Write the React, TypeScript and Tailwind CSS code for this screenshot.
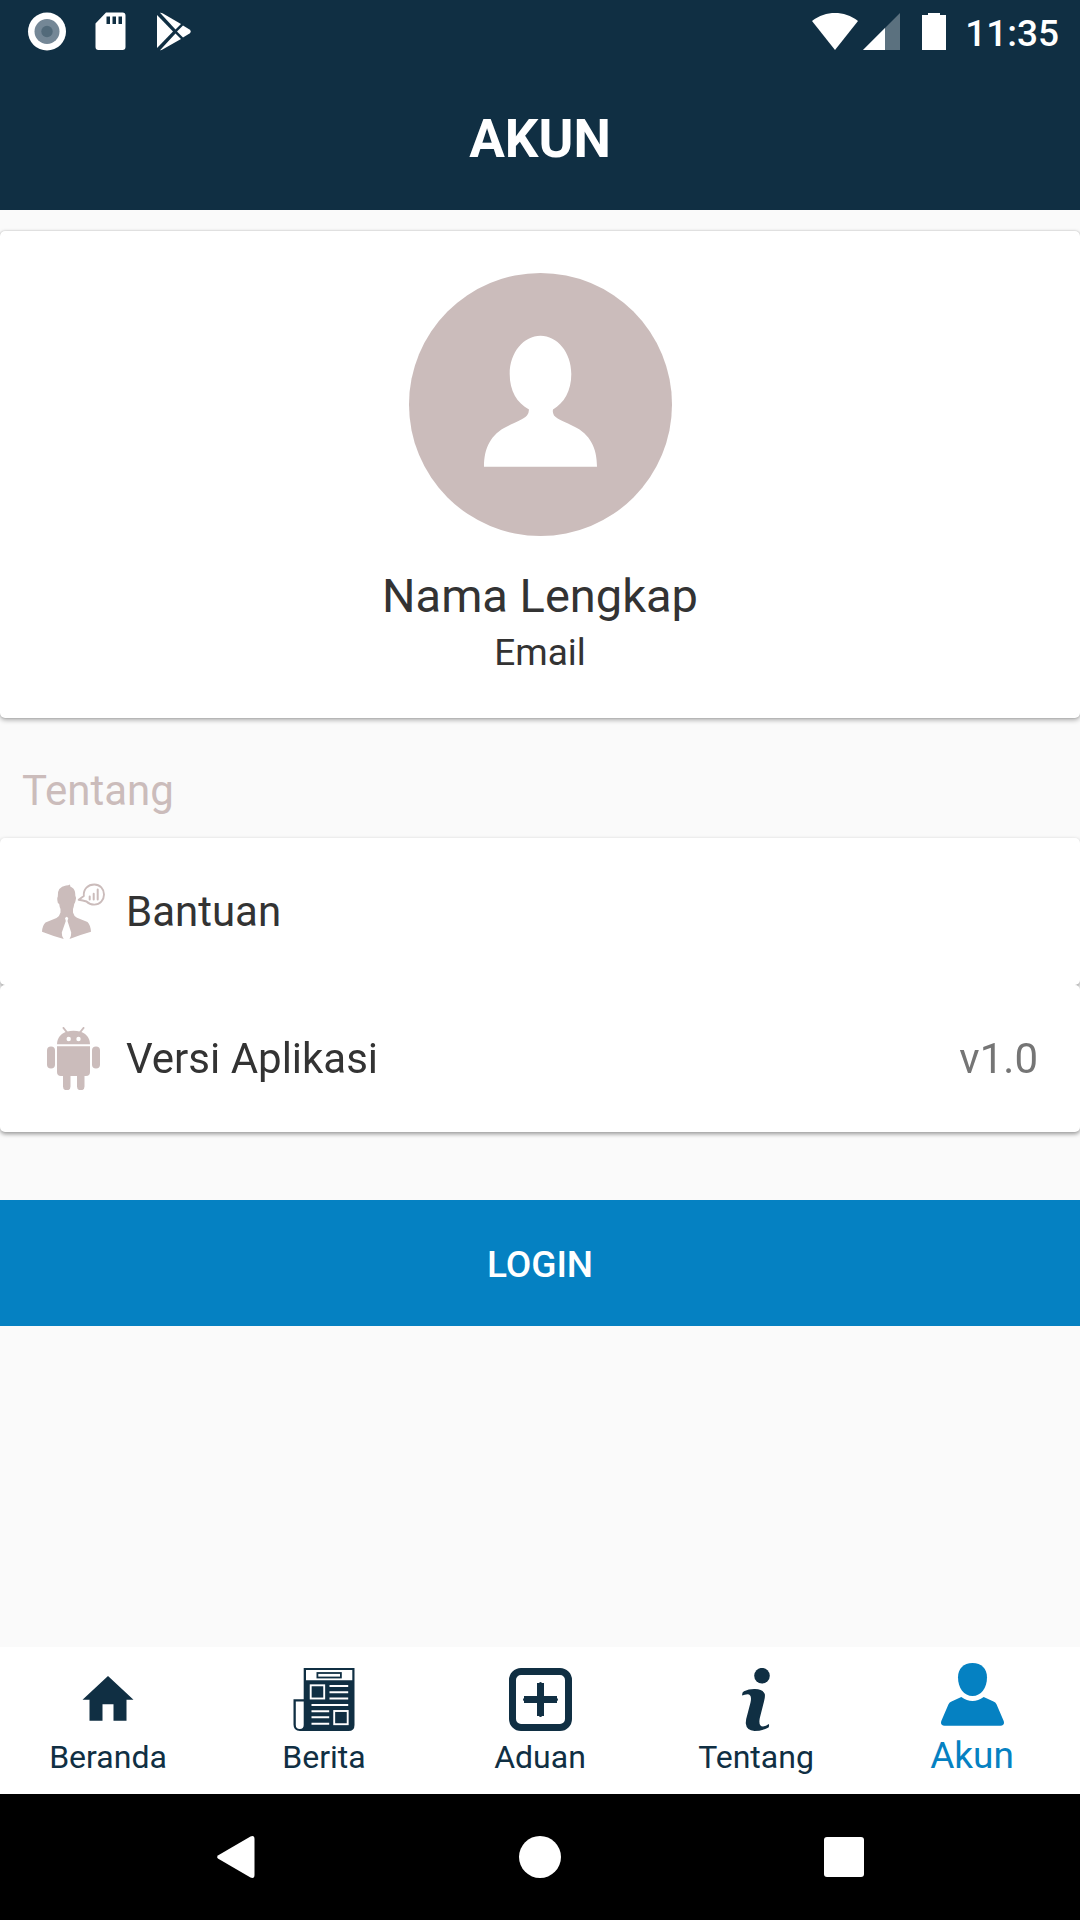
/**
 * Account screen: profile card, about list, login button and bottom tabs
 */

import React from 'react'

type IconProps = { className?: string }

const CameraDotIcon = () => (
  <svg viewBox="0 0 48 48" className="size-12" aria-hidden="true">
    <circle cx="24" cy="23.500" r="19" fill="#fff" />
    <circle cx="24" cy="23.500" r="12.500" fill="#748796" />
    <circle cx="24" cy="23.500" r="5.700" fill="#526a7a" />
  </svg>
)

const SdCardIcon = () => (
  <svg viewBox="0 0 48 48" className="size-12" aria-hidden="true">
    <path
      fill="#fff"
      fillRule="evenodd"
      d="M19 4.500H35.500Q38.500 4.500 38.500 7.500V39Q38.500 42 35.500 42H11.500Q8.500 42 8.500 39V15.500ZM19.500 8.500V16H23V8.500ZM25.500 8.500V16H29V8.500ZM31.500 8.500V16H35V8.500Z"
    />
  </svg>
)

const PlayStoreIcon = () => (
  <svg viewBox="0 0 48 48" className="size-12" aria-hidden="true" fill="#fff">
    <path d="M6 7V40L22 23.500Z" />
    <path d="M9 4.800Q10 4.500 11.500 5.300L30 16L24.500 21.500Z" />
    <path d="M9 42.200Q10 42.500 11.500 41.500L30 31L24.500 25.500Z" />
    <path d="M32 17.500L38.500 21.500Q41 23.500 38.500 25.500L32 29.500L26 23.500Z" />
  </svg>
)

const WifiIcon = () => (
  <svg viewBox="0 0 46 38" className="h-[38px] w-[46px]" aria-hidden="true">
    <path fill="#fff" d="M23 37L0 8C7 2.500 15 0 23 0S39 2.500 46 8Z" />
  </svg>
)

const SignalIcon = () => (
  <svg viewBox="0 0 38 38" className="size-[38px]" aria-hidden="true">
    <path fill="#5b717f" d="M37 0V37H0Z" />
    <path fill="#fff" d="M22 15V37H0Z" />
  </svg>
)

const BatteryIcon = () => (
  <svg viewBox="0 0 24 38" className="h-[38px] w-6" aria-hidden="true">
    <path fill="#fff" d="M6 -1H18V2H24V37H0V2H6Z" />
  </svg>
)

const AvatarIcon = () => (
  <svg viewBox="0 0 263 263" className="size-[263px]" role="img" aria-label="Foto profil">
    <circle cx="131.500" cy="131.500" r="131.500" fill="#cbbcbb" />
    <path
      fill="#fff"
      d="M131.500 62.700C148 62.700 162.300 79 162.300 101C162.300 118 155 130 144 136.500Q143.300 139.500 145 142.500C149 147 157 149 165 153.500C181 161 188 175 188 193.700H75C75 175 82 161 98 153.500C106 149 114 147 118 142.500Q120 139.500 120 136.500C108 130 100.700 118 100.700 101C100.700 79 115 62.700 131.500 62.700Z"
    />
  </svg>
)

const HelpIcon = () => (
  <svg viewBox="0 0 63 63" className="size-[63px] shrink-0" aria-hidden="true">
    <path
      fill="#cbbcbb"
      d="M28 4.500L28.300 6.500C32 8 33.500 11 33.300 15.500Q34.500 17 33.500 21Q33 23 32.200 24Q31.800 27 31 29V32.500Q32 36.500 35 37.800L45.500 42Q48.500 45 49 51.700Q39 54.500 27.500 59Q29.500 55.500 29.200 52.500L25.500 41L26.300 38L24.700 36.800L23 38L23.800 41L19.800 52.500Q19.500 55.500 21.700 59Q11 56 0 51.700Q.3 45.500 3.500 42.500L14.500 38Q17.500 36.500 18.500 32.500V29Q17.500 27 17.200 24Q15.300 23 15.300 20Q15 17.500 15.800 16.500Q15 7 24 5.600Q26.500 5.500 28 4.500Z"
    />
    <path
      fill="none"
      stroke="#cbbcbb"
      strokeWidth="1.900"
      strokeLinejoin="round"
      d="M36.700 19.800L41.800 16C41.200 9 46 4.500 52.300 4.500C58 4.500 62 9 62 14.500C62 20 58 24.600 52.300 24.600Q47.500 24.600 44.500 21.500Q41 20.500 36.700 19.800Z"
    />
    <path stroke="#cbbcbb" strokeWidth="2" strokeLinecap="round" d="M47.700 16.500V19.500M51.700 13.800V19.500M55.700 9.500V19.500" />
  </svg>
)

const AndroidIcon = () => (
  <svg viewBox="0 0 63 63" className="size-[63px] shrink-0" aria-hidden="true">
    <g fill="#cbbcbb">
      <path d="M15 17.300C15 11 19 6.500 24.500 4.700Q31.500 3 38.500 4.700C44 6.500 48 11 48 17.300Z" />
      <path d="M15 19.300H48V45Q48 49 44 49H42.500V59.500A3.700 3.700 0 0 1 35 59.500V49H28.500V59.500A3.700 3.700 0 0 1 21 59.500V49H19Q15 49 15 45Z" />
      <rect x="5" y="19.500" width="8" height="22" rx="4" />
      <rect x="50" y="19.500" width="8" height="22" rx="4" />
    </g>
    <path stroke="#cbbcbb" strokeWidth="2" strokeLinecap="round" d="M21.500 1L25.500 6M41.500 1L37.500 6" />
    <circle cx="26.700" cy="12" r="2.200" fill="#fff" />
    <circle cx="36.500" cy="12" r="2.200" fill="#fff" />
  </svg>
)

const HomeIcon = ({ className = '' }: IconProps) => (
  <svg viewBox="0 0 63 63" className={className} fill="currentColor" aria-hidden="true">
    <path d="M31 8L56.500 31.700H49.500V52.700H36.500V36.300H25.500V52.700H12.500V31.700H5.500Z" />
  </svg>
)

const NewsIcon = ({ className = '' }: IconProps) => (
  <svg viewBox="0 0 63 63" className={className} aria-hidden="true">
    <path fill="currentColor" d="M10.700 0H61.500V57Q61.500 63 55.500 63H7Q.5 63 .5 56.500V31.300H10.700Z" />
    <path fill="#fff" d="M2.800 33.500H10.700V57Q10.700 61 6.800 61Q2.800 61 2.800 57ZM13 2H59.300V12.300H13Z" />
    <rect x="24.400" y="5" width="23.500" height="4.500" fill="none" stroke="currentColor" strokeWidth="1.800" />
    <g fill="none" stroke="#fff" strokeWidth="1.900">
      <rect x="17.700" y="17.300" width="13.500" height="13.200" />
      <rect x="41.200" y="43" width="13.500" height="13.200" />
      <path d="M36.500 18H55.200M36.500 24.300H55.200M36.500 30.500H55.200M18.500 37H55.200M18.500 43.300H36.200M18.500 49.300H36.200M18.500 55.700H36.200" />
    </g>
  </svg>
)

const AddIcon = ({ className = '' }: IconProps) => (
  <svg viewBox="0 0 63 63" className={className} fill="none" stroke="currentColor" strokeWidth="7" aria-hidden="true">
    <rect x="3.500" y="3.500" width="56" height="56" rx="8.500" />
    <path strokeLinecap="round" strokeWidth="3" d="M31.500 15.500V47.500M15.500 31.500H47.500" />
    <path d="M31.500 15V48M15 31.500H48" />
  </svg>
)

const InfoIcon = ({ className = '' }: IconProps) => (
  <svg viewBox="0 0 63 63" className={className} fill="currentColor" aria-hidden="true">
    <circle cx="37" cy="7.700" r="7.800" />
    <path d="M17.200 27.500Q16.800 24.500 19 23.300Q24 20.800 30 21Q38 21.200 39.800 26Q40.300 29 39 33.500L34.800 50Q33.200 58.500 38 58.500Q41 58.400 43.800 56Q44.500 58 43.500 59.500Q37 63 29.500 63Q21.500 62.500 20.800 55.500Q20.600 52 22.500 46L25.500 34.500Q27.300 26.500 22.500 26.300Q19.500 26.500 17.200 27.500Z" />
  </svg>
)

const UserIcon = ({ className = '' }: IconProps) => (
  <svg viewBox="0 0 63 63" className={className} fill="currentColor" aria-hidden="true">
    <path d="M31.500 0C40.500 0 46 5.500 46 14.500C46 25 40 33 31.500 33S17 25 17 14.500C17 5.500 22.500 0 31.500 0Z" />
    <path d="M20.300 34Q31.500 42 42.700 34L52.500 38.500Q54.500 39.300 55.500 41.300L62.700 58Q64 62.700 59.500 62.700H3.500Q-1 62.700 .3 58L7.500 41.300Q8.500 39.300 10.500 38.500Z" />
  </svg>
)

const StatusBar = () => (
  <div className="flex h-16 items-center justify-between pr-[21px] pl-[23px]">
    <div className="flex gap-4">
      <CameraDotIcon />
      <SdCardIcon />
      <PlayStoreIcon />
    </div>
    <div className="flex items-center">
      <WifiIcon />
      <div className="ml-[5px]">
        <SignalIcon />
      </div>
      <div className="mr-[19px] ml-[21px]">
        <BatteryIcon />
      </div>
      <span className="pt-1 text-[37px] leading-10 font-medium">11:35</span>
    </div>
  </div>
)

const tabs = [
  { label: 'Beranda', Icon: HomeIcon },
  { label: 'Berita', Icon: NewsIcon },
  { label: 'Aduan', Icon: AddIcon },
  { label: 'Tentang', Icon: InfoIcon },
  { label: 'Akun', Icon: UserIcon, active: true },
]

const BottomTabs = () => (
  <nav className="grid grid-cols-5 bg-white pb-2">
    {tabs.map(({ label, Icon, active }) => (
      <a
        key={label}
        href="#"
        aria-current={active ? 'page' : undefined}
        className={
          active
            ? 'flex flex-col items-center pt-4 text-[37px] leading-[60px] text-[#0581c2]'
            : 'flex flex-col items-center pt-[21px] text-[32px] leading-[52px] text-[#102f43]'
        }
      >
        <Icon className="size-[63px]" />
        {label}
      </a>
    ))}
  </nav>
)

const SystemNav = () => (
  <div className="flex h-[126px] items-center justify-center gap-64 bg-black">
    <button type="button" aria-label="Back">
      <svg viewBox="0 0 48 48" className="size-12" fill="#fff">
        <path d="M6.300 22.200L38.500 3.500Q42.500 2 42.500 6V42Q42.500 46 38.500 44.500L6.300 25.800Q4 24 6.300 22.200Z" />
      </svg>
    </button>
    <button type="button" aria-label="Home">
      <svg viewBox="0 0 48 48" className="size-12" fill="#fff">
        <circle cx="24" cy="24" r="21" />
      </svg>
    </button>
    <button type="button" aria-label="Recent apps">
      <svg viewBox="0 0 48 48" className="size-12" fill="#fff">
        <rect x="4" y="4" width="40" height="40" rx="3" />
      </svg>
    </button>
  </div>
)

export default function App() {
  return (
    <div className="flex min-h-screen flex-col bg-[#fafafa] font-['Roboto',sans-serif] text-[#333]">
      <header className="bg-[#102f43] text-white">
        <StatusBar />
        <h1 className="pt-[43px] pb-[39px] text-center text-[53px] leading-16 font-bold">AKUN</h1>
      </header>

      <main className="flex-1 pt-[21px]">
        {/* profile */}
        <section className="flex flex-col items-center rounded-[5px] bg-white pt-[42px] pb-9 shadow-[0_2px_5px_rgba(0,0,0,0.32),0_0_2px_rgba(0,0,0,0.2)]">
          <AvatarIcon />
          <p className="mt-8 text-[47px] leading-14">Nama Lengkap</p>
          <p className="text-[37px] leading-[58px]">Email</p>
        </section>

        {/* about */}
        <h2 className="mt-[45px] mb-[19px] px-[22px] text-[42px] leading-14 text-[#cbbcbb]">Tentang</h2>
        <div className="text-[42px] leading-[61px] drop-shadow-[0_2px_2px_rgba(0,0,0,0.4)]">
          <a href="#" className="flex items-center gap-[21px] rounded-[5px] bg-white p-[42px]">
            <HelpIcon />
            Bantuan
          </a>
          <div className="flex items-center gap-[21px] rounded-[5px] bg-white p-[42px]">
            <AndroidIcon />
            <span className="flex-1">Versi Aplikasi</span>
            <span className="text-[#757575]">v1.0</span>
          </div>
        </div>

        <button type="button" className="mt-[68px] h-[126px] w-full bg-[#0581c2] pt-[3px] text-[37px] font-medium text-white">
          LOGIN
        </button>
      </main>

      <BottomTabs />
      <SystemNav />
    </div>
  )
}
